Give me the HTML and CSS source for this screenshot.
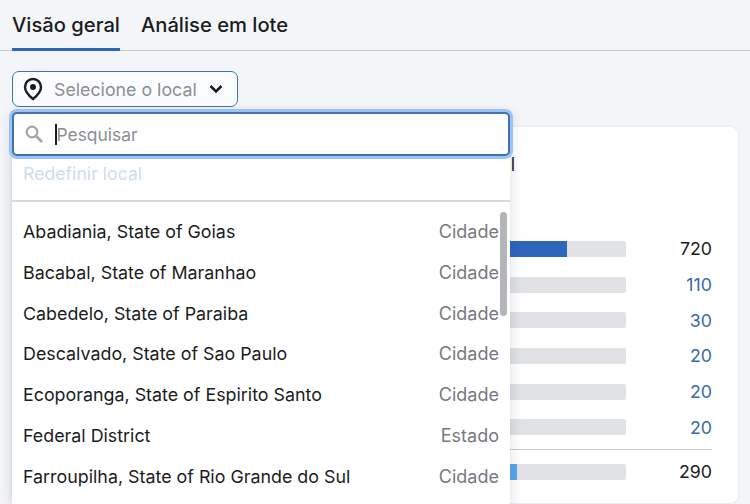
FILE: index.html
```html
<!DOCTYPE html>
<html lang="pt">
<head>
<meta charset="utf-8">
<title>Visão geral</title>
<link rel="stylesheet" href="styles.css">
</head>
<body>
<nav class="tabs">
  <a class="tab tab-active">Visão geral</a>
  <a class="tab">Análise em lote</a>
</nav>
<main class="main">
  <button class="select">
    <svg class="pin" viewBox="0 0 20 24" width="20" height="24"><path d="M10 2C5.300 2 2 5.500 2 10c0 5 4.600 9.300 8 12 3.400-2.700 8-7 8-12 0-4.500-3.300-8-8-8z" fill="none" stroke="#1a1c22" stroke-width="2.400"/><circle cx="10" cy="10" r="3" fill="#1a1c22"/></svg>
    <span class="select-text">Selecione o local</span>
    <svg class="chev" viewBox="0 0 14 10" width="14" height="10"><path d="M1.500 2l5.500 5.500L12.500 2" fill="none" stroke="#1a1c22" stroke-width="2.600"/></svg>
  </button>
  <section class="card">
    <h2 class="card-title">Total</h2>
    <div class="rows">
      <div class="row"><div class="bar"><div class="fill fill-dark"></div></div><span class="val">720</span></div>
      <div class="row"><div class="bar"></div><span class="val val-link">110</span></div>
      <div class="row"><div class="bar"></div><span class="val val-link">30</span></div>
      <div class="row"><div class="bar"></div><span class="val val-link">20</span></div>
      <div class="row"><div class="bar"></div><span class="val val-link">20</span></div>
      <div class="row"><div class="bar"></div><span class="val val-link">20</span></div>
      <div class="divider"></div>
      <div class="row"><div class="bar"><div class="fill fill-light"></div></div><span class="val">290</span></div>
    </div>
  </section>
  <div class="dropdown">
    <div class="search">
      <svg class="mag" viewBox="0 0 20 20" width="20" height="20"><circle cx="8" cy="8" r="5.300" fill="none" stroke="#a3a5aa" stroke-width="2.200"/><path d="M12 12l6 6" stroke="#a3a5aa" stroke-width="2.600"/></svg>
      <span class="caret"></span><span class="search-text">Pesquisar</span>
    </div>
    <div class="reset">Redefinir local</div>
    <div class="list">
      <div class="item"><span>Abadiania, State of Goias</span><span class="kind">Cidade</span></div>
      <div class="item"><span>Bacabal, State of Maranhao</span><span class="kind">Cidade</span></div>
      <div class="item"><span>Cabedelo, State of Paraiba</span><span class="kind">Cidade</span></div>
      <div class="item"><span>Descalvado, State of Sao Paulo</span><span class="kind">Cidade</span></div>
      <div class="item"><span>Ecoporanga, State of Espirito Santo</span><span class="kind">Cidade</span></div>
      <div class="item"><span>Federal District</span><span class="kind">Estado</span></div>
      <div class="item"><span>Farroupilha, State of Rio Grande do Sul</span><span class="kind">Cidade</span></div>
      <div class="scrollbar"></div>
    </div>
  </div>
</main>
</body>
</html>
```
FILE: styles.css
```css
* { box-sizing: border-box; }
html, body { margin: 0; height: 100%; }
body {
  width: 750px;
  height: 504px;
  overflow: hidden;
  background: #f3f5f9;
  font-family: Inter, "Liberation Sans", sans-serif;
  color: #1a1c22;
}
.tabs {
  display: flex;
  gap: 21px;
  height: 51px;
  padding: 0 12px;
  border-bottom: 1px solid #c9cbd0;
}
.tab {
  height: 51px;
  padding-top: 12px;
  font-size: 20.200px;
  line-height: 26px;
  font-weight: 500;
}
.tab-active { border-bottom: 3px solid #2e66bc; }
.main {
  position: relative;
  height: 453px;
  padding: 20px 12px 0;
}
.select {
  display: flex;
  align-items: center;
  width: 226px;
  height: 36px;
  padding: 0 0 0 10px;
  border: 1px solid #3f72b5;
  border-radius: 7px;
  background: #fbfcfe;
  font: inherit;
}
.pin { flex: none; }
.select-text {
  margin-left: 11px;
  font-size: 17.800px;
  color: #8c8e94;
}
.chev { margin-left: 12px; }
.card {
  margin: 20px 0 0;
  height: 376px;
  background: #fff;
  border-radius: 8px;
  box-shadow: 0 0 3px rgba(30, 40, 70, .1);
}
.card-title {
  width: 503px;
  margin: 0;
  padding-top: 27px;
  text-align: right;
  font-size: 18px;
  line-height: 22px;
  font-weight: 400;
}
.rows {
  padding: 55px 26px 0 0;
}
.row {
  display: flex;
  align-items: center;
  justify-content: flex-end;
  height: 35.700px;
}
.divider {
  height: 1px;
  margin: 4px 0 4px 498px;
  background: #c9cbd0;
}
.bar {
  width: 320px;
  height: 16px;
  background: #e0e2e6;
  border-radius: 2px;
  overflow: hidden;
  display: flex;
  justify-content: flex-end;
}
.fill { height: 100%; }
.fill-dark { width: 118px; background: #2e66bc; margin-right: 59px; }
.fill-light { width: 7px; background: #58a6ee; margin-right: 109px; }
.val {
  width: 86px;
  text-align: right;
  font-size: 17.800px;
}
.val-link { color: #3a6aa8; }
.dropdown {
  position: absolute;
  left: 12px;
  top: 61px;
  width: 498px;
  height: 392px;
  background: #fff;
  box-shadow: 0 2px 12px rgba(30, 40, 70, .16);
}
.search {
  display: flex;
  align-items: center;
  height: 44px;
  padding-left: 10px;
  border: 2px solid #3f72b5;
  border-radius: 5px;
  background: #fff;
  box-shadow: 0 0 0 3px #9cc3f3;
}
.mag { flex: none; }
.caret {
  flex: none;
  width: 1.500px;
  height: 21px;
  margin-left: 11px;
  background: #1a1c22;
}
.search-text {
  font-size: 17.400px;
  color: #8c8e94;
}
.reset {
  height: 46px;
  padding: 7px 11px 0;
  border-bottom: 2px solid #d9dade;
  font-size: 17.700px;
  line-height: 22px;
  color: #cfdcec;
}
.list {
  position: relative;
  padding-top: 9px;
  padding-right: 11px;
}
.item {
  display: flex;
  justify-content: space-between;
  align-items: center;
  height: 40.850px;
  padding-left: 11px;
  font-size: 17.850px;
}
.kind { color: #77797f; font-size: 18px; }
.scrollbar {
  position: absolute;
  top: 10px;
  right: 3px;
  width: 7px;
  height: 104px;
  border-radius: 4px;
  background: #b4b5b8;
}
```
